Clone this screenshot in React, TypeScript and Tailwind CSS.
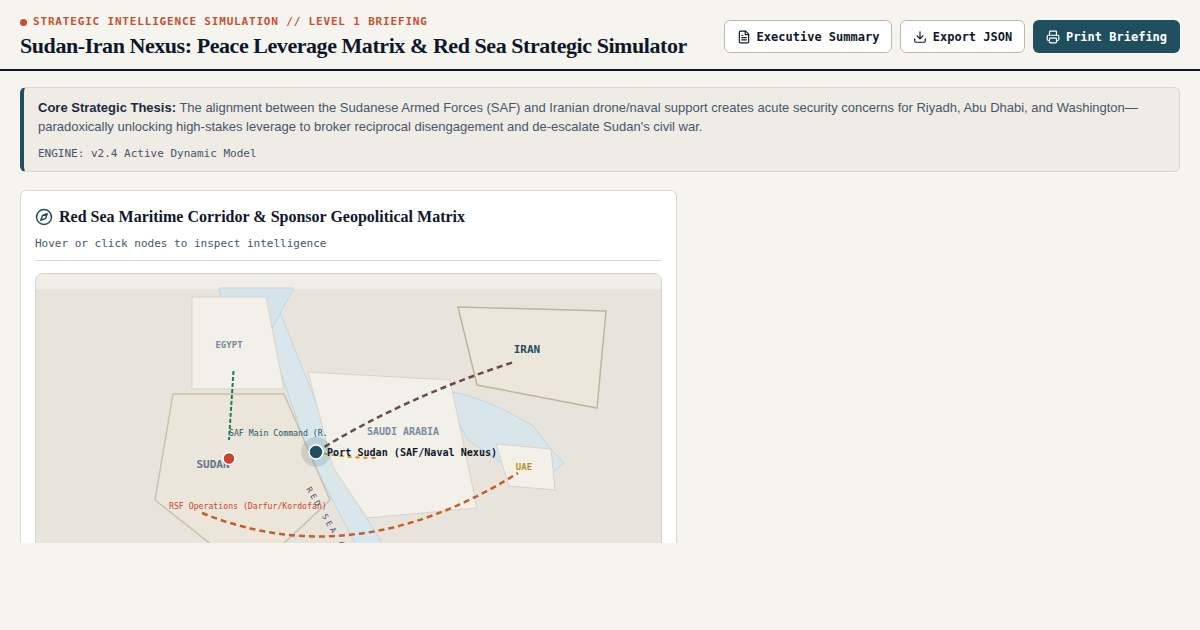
import React from 'react';
import { Compass, Download, FileText, Printer } from 'lucide-react';

function MapPanel() {
  return (
    <div className="h-[400px] rounded-lg border border-[#d9d3c5] bg-[#f1eee7] overflow-hidden">
      {/* viewBox starts at the panel's page position so coordinates stay readable */}
      <svg width="625" height="400" viewBox="36 274 625 400" className="block">
        <rect x="36" y="289" width="625" height="385" fill="#e8e4dc" />

        {/* water */}
        <path
          d="M262 300 L280 312 L315 400 L343 480 L382 543 L392 570 L366 570 L355 543 L322 480 L303 437 L280 370 Z"
          fill="#d9e7ed"
          stroke="#bfd5df"
          strokeWidth="1"
        />
        <polygon points="219,288 294,288 270,332 224,320" fill="#d5e4ea" stroke="#bfd5df" strokeWidth="1" />
        <path
          d="M452 392 Q485 397 532 425 L550 448 L564 463 L553 472 L500 462 L468 440 L458 422 Z"
          fill="#d8e6ec"
          stroke="#bfd5df"
          strokeWidth="1"
        />

        {/* countries */}
        <polygon points="192,297 266,297 284,389 192,389" fill="#f3f0e9" stroke="#d9d3c5" strokeWidth="1" />
        <polygon points="173,394 284,394 330,500 250,575 155,500" fill="#ece6da" stroke="#c8c1b2" strokeWidth="1.5" />
        <polygon points="308,372 450,380 477,508 367,518 333,467" fill="#f3f0e9" stroke="#d9d3c5" strokeWidth="1" />
        <polygon points="458,307 606,311 597,408 477,385" fill="#ede6da" stroke="#bdb5a4" strokeWidth="1.5" />
        <polygon points="496,444 551,449 555,490 509,486" fill="#f3f0e9" stroke="#d9d3c5" strokeWidth="1" />

        {/* links */}
        <path d="M233.500 371 L229 440" fill="none" stroke="#1f7a5c" strokeWidth="2" strokeDasharray="4 2" />
        <path d="M316 452 Q405 397 514 362" fill="none" stroke="#6b4a4a" strokeWidth="2.500" strokeDasharray="6 4" />
        <path d="M316 452 Q345 458 377 458" fill="none" stroke="#c8961e" strokeWidth="2" strokeDasharray="4 4" />
        <path d="M202 513 Q355 575 518 473" fill="none" stroke="#c45f2c" strokeWidth="2.500" strokeDasharray="6 4" />

        {/* labels */}
        <g fontFamily="'DejaVu Sans Mono', monospace">
          <text x="229" y="348" textAnchor="middle" fontSize="9" fontWeight="700" fill="#7a8799">EGYPT</text>
          <text x="213" y="468" textAnchor="middle" fontSize="11" fontWeight="700" fill="#64748b">SUDAN</text>
          <text x="403" y="435" textAnchor="middle" fontSize="10" fontWeight="700" fill="#7a8ba0">SAUDI ARABIA</text>
          <text x="527" y="353" textAnchor="middle" fontSize="11" fontWeight="700" fill="#1f4e5f">IRAN</text>
          <text x="524" y="470" textAnchor="middle" fontSize="9" fontWeight="700" fill="#b8901f">UAE</text>
          <text x="229" y="436" fontSize="8.200" fill="#1f5566">SAF Main Command (R.</text>
          <text x="169" y="509" fontSize="8.200" fill="#c8452f">RSF Operations (Darfur/Kordofan)</text>
          <text x="327" y="456" fontSize="10.100" fontWeight="700" fill="#0f172a">Port Sudan (SAF/Naval Nexus)</text>
          <text x="306" y="489" fontSize="8" letterSpacing="3" fill="#475569" transform="rotate(60 306 489)">RED SEA C</text>
        </g>

        {/* nodes */}
        <circle cx="316" cy="452" r="15" fill="#1f4e5f" fillOpacity="0.15" />
        <circle cx="316" cy="452" r="7" fill="#1f4e5f" stroke="#ffffff" strokeWidth="1.500" />
        <circle cx="229" cy="458.500" r="6" fill="#c8452f" stroke="#ffffff" strokeWidth="1.500" />
      </svg>
    </div>
  );
}

export default function App() {
  return (
    <div className="h-[630px] w-[1200px] overflow-hidden bg-[#f6f4ef] font-['Liberation_Sans',sans-serif]">
      <header className="flex h-[71px] items-center justify-between border-b-2 border-[#0f172a] px-5 pt-1">
        <div className="mt-[3px] whitespace-nowrap">
          <div className="flex items-center gap-[6px] font-['DejaVu_Sans_Mono',monospace] text-[11px] leading-4 font-bold tracking-[0.075em] text-[#c8502f]">
            <span className="h-[7px] w-[7px] rounded-full bg-[#c8502f]" />
            STRATEGIC INTELLIGENCE SIMULATION // LEVEL 1 BRIEFING
          </div>
          <h1 className="font-['Liberation_Serif',serif] text-[22px] leading-8 font-bold tracking-[-0.02em] text-[#0f172a]">
            Sudan-Iran Nexus: Peace Leverage Matrix &amp; Red Sea Strategic Simulator
          </h1>
        </div>
        <div className="flex gap-2 whitespace-nowrap font-['DejaVu_Sans_Mono',monospace] text-xs font-semibold">
          <button className="flex h-[33px] w-[168px] items-center justify-center gap-[6px] rounded-md border border-[#c2b7a3] bg-white text-[#0f172a]">
            <FileText size={14} />
            Executive Summary
          </button>
          <button className="flex h-[33px] w-[125px] items-center justify-center gap-[6px] rounded-md border border-[#c2b7a3] bg-white text-[#0f172a]">
            <Download size={14} />
            Export JSON
          </button>
          <button className="flex h-[33px] w-[147px] items-center justify-center gap-[6px] rounded-md bg-[#1f4e5f] text-white">
            <Printer size={14} />
            Print Briefing
          </button>
        </div>
      </header>

      <main className="px-5 pt-4">
        <section className="h-[85px] rounded-md border border-l-4 border-[#ddd8cb] border-l-[#1f4e5f] bg-[#efece5] px-[14px] pt-[10px]">
          <p className="text-[13px] leading-[19px] text-[#475569]">
            <strong className="font-bold text-[#1e293b]">Core Strategic Thesis:</strong> The alignment between the Sudanese Armed Forces (SAF) and Iranian drone/naval support creates acute security concerns for Riyadh, Abu Dhabi, and Washington—paradoxically unlocking high-stakes leverage to broker reciprocal disengagement and de-escalate Sudan's civil war.
          </p>
          <p className="mt-[10px] font-['DejaVu_Sans_Mono',monospace] text-[11px] leading-4 text-[#475569]">
            ENGINE: v2.4 Active Dynamic Model
          </p>
        </section>

        <section className="mt-[18px] h-[353px] w-[657px] overflow-hidden rounded-t-md border border-b-0 border-[#ddd8cb] bg-white px-[14px] pt-[14px]">
          <h2 className="flex items-center gap-[6px] font-['Liberation_Serif',serif] text-base leading-6 font-bold text-[#0f172a]">
            <Compass size={18} className="text-[#1f4e5f]" />
            Red Sea Maritime Corridor &amp; Sponsor Geopolitical Matrix
          </h2>
          <p className="mt-[7px] border-b border-[#ddd8cb] pb-[8px] font-['DejaVu_Sans_Mono',monospace] text-[11px] leading-4 text-[#475569]">
            Hover or click nodes to inspect intelligence
          </p>
          <div className="mt-3">
            <MapPanel />
          </div>
        </section>
      </main>
    </div>
  );
}
